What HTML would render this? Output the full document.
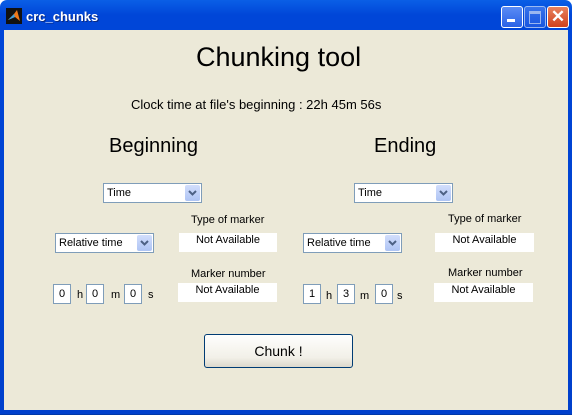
<!DOCTYPE html>
<html><head><style>
body{margin:0;width:574px;height:417px;background:#fff;position:relative;overflow:hidden;font-family:"Liberation Sans",Arial,sans-serif;}
.a{position:absolute;}
.win{left:0;top:0;width:572px;height:414px;background:linear-gradient(#0a5fe6,#0046d8 15px,#0040cc);border-radius:7px 7px 0 0;}
.client{left:4px;top:30px;width:564px;height:380px;background:#ece9d8;}
.t{position:absolute;white-space:nowrap;color:#000;}
.sel{position:absolute;height:18px;border:1px solid #7f9db9;background:#fff;font-size:11px;line-height:18px;padding-left:3px;box-sizing:content-box;}
.sel .ar{position:absolute;right:1px;top:1px;width:15px;height:16px;background:linear-gradient(#d2defc,#aec4f4);border-radius:2px;}
.sel .ar svg{position:absolute;left:3px;top:5px;}
.box{position:absolute;background:#fff;font-size:11px;text-align:center;line-height:14px;}
.in{position:absolute;width:16px;height:18px;border:1px solid #7f9db9;background:#fff;font-size:11px;line-height:18px;text-align:center;}
.wb{position:absolute;top:6px;width:20px;height:20px;border:1px solid #fff;border-radius:3px;}
</style></head><body>
<div class="a win"></div>
<svg class="a" style="left:6px;top:8px" width="16" height="16"><rect width="16" height="16" fill="#111"/><path d="M2 12 L8 6 L11 2 L14 13 L9 9 Z" fill="#f07818"/><path d="M2 12 L8 6 L9 9Z" fill="#3aa0e0"/></svg>
<div class="t" style="left:26px;top:9px;color:#fff;font-weight:bold;font-size:13px;text-shadow:1px 1px #0a2a80">crc_chunks</div>
<div class="wb" style="left:501px;background:linear-gradient(#5a8cf5,#2a62e6)"><div class="a" style="left:5px;top:12px;width:8px;height:3px;background:#fff"></div></div>
<div class="wb" style="left:524px;background:linear-gradient(#5a8cf5,#2a62e6);opacity:.6"><div class="a" style="left:4px;top:4px;width:10px;height:9px;border:1px solid #fff;border-top-width:3px"></div></div>
<div class="wb" style="left:547px;background:linear-gradient(#e8825e,#d0401c);color:#fff;font-size:17px;font-weight:bold;text-align:center;line-height:20px">✕</div>
<div class="a client"></div>
<div class="t" style="left:196px;top:42px;font-size:27px">Chunking tool</div>
<div class="t" style="left:131px;top:97px;font-size:13px">Clock time at file's beginning : 22h 45m 56s</div>
<div class="t" style="left:109px;top:135px;font-size:20px">Beginning</div>
<div class="t" style="left:374px;top:135px;font-size:20px">Ending</div>

<div class="sel" style="left:103px;top:183px;width:94px">Time<div class="ar"><svg width="9" height="6"><path d="M1 1 L4.5 4.5 L8 1" stroke="#4d6185" stroke-width="2" fill="none"/></svg></div></div>
<div class="sel" style="left:354px;top:183px;width:94px">Time<div class="ar"><svg width="9" height="6"><path d="M1 1 L4.5 4.5 L8 1" stroke="#4d6185" stroke-width="2" fill="none"/></svg></div></div>
<div class="sel" style="left:55px;top:233px;width:94px">Relative time<div class="ar"><svg width="9" height="6"><path d="M1 1 L4.5 4.5 L8 1" stroke="#4d6185" stroke-width="2" fill="none"/></svg></div></div>
<div class="sel" style="left:303px;top:233px;width:94px">Relative time<div class="ar"><svg width="9" height="6"><path d="M1 1 L4.5 4.5 L8 1" stroke="#4d6185" stroke-width="2" fill="none"/></svg></div></div>

<div class="t" style="left:191px;top:214px;font-size:11px">Type of marker</div>
<div class="box" style="left:179px;top:233px;width:98px;height:19px">Not Available</div>
<div class="t" style="left:191px;top:268px;font-size:11px">Marker number</div>
<div class="box" style="left:178px;top:283px;width:99px;height:19px">Not Available</div>

<div class="t" style="left:448px;top:213px;font-size:11px">Type of marker</div>
<div class="box" style="left:435px;top:233px;width:99px;height:19px">Not Available</div>
<div class="t" style="left:448px;top:267px;font-size:11px">Marker number</div>
<div class="box" style="left:434px;top:283px;width:99px;height:19px">Not Available</div>

<div class="in" style="left:53px;top:284px">0</div>
<div class="t" style="left:77px;top:289px;font-size:11px">h</div>
<div class="in" style="left:86px;top:284px">0</div>
<div class="t" style="left:111px;top:289px;font-size:11px">m</div>
<div class="in" style="left:124px;top:284px">0</div>
<div class="t" style="left:148px;top:289px;font-size:11px">s</div>

<div class="in" style="left:303px;top:284px">1</div>
<div class="t" style="left:326px;top:290px;font-size:11px">h</div>
<div class="in" style="left:337px;top:284px">3</div>
<div class="t" style="left:360px;top:290px;font-size:11px">m</div>
<div class="in" style="left:375px;top:284px">0</div>
<div class="t" style="left:397px;top:290px;font-size:11px">s</div>

<div class="a" style="left:204px;top:334px;width:147px;height:32px;border:1px solid #003c74;border-radius:3px;background:linear-gradient(#fefefd,#f2f0e8 70%,#dcd8cc);font-size:14px;text-align:center;line-height:32px">Chunk !</div>
<div class="a" style="left:0;top:414px;width:572px;height:1px;background:#0038a8"></div>
</body></html>
